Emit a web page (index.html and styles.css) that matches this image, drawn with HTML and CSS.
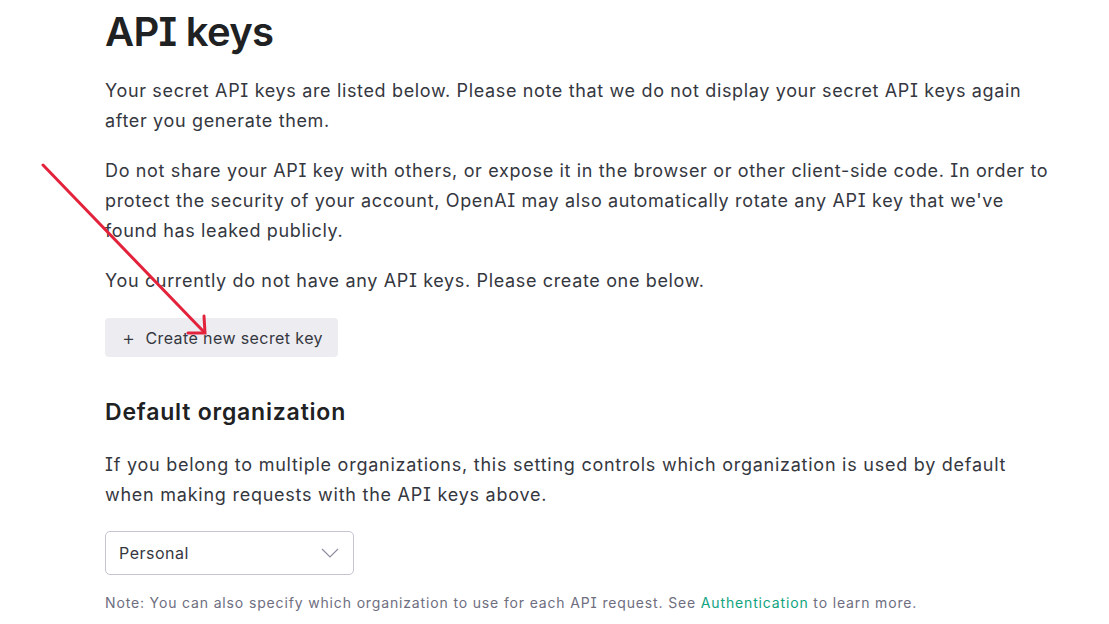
FILE: index.html
```html
<!DOCTYPE html>
<html lang="en">
<head>
<meta charset="utf-8">
<title>API keys</title>
<link rel="stylesheet" href="styles.css">
</head>
<body>
<main class="page">
  <h1 class="title">API keys</h1>
  <p class="text">Your secret API keys are listed below. Please note that we do not display your secret API keys again after you generate them.</p>
  <p class="text">Do not share your API key with others, or expose it in the browser or other client-side code. In order to protect the security of your account, OpenAI may also automatically rotate any API key that we've found has leaked publicly.</p>
  <p class="text">You currently do not have any API keys. Please create one below.</p>
  <button class="btn" type="button"><span class="plus">+</span>Create new secret key</button>
  <h2 class="subtitle">Default organization</h2>
  <p class="text text-org">If you belong to multiple organizations, this setting controls which organization is used by default when making requests with the API keys above.</p>
  <div class="select">
    <span>Personal</span>
    <svg class="chev" width="18" height="10" viewBox="0 0 18 10"><path d="M1 1l8 8 8-8" fill="none" stroke="#8e8ea0" stroke-width="1.2"/></svg>
  </div>
  <p class="note">Note: You can also specify which organization to use for each API request. See <a class="link" href="#">Authentication</a> to learn more.</p>
</main>
<svg class="arrow" width="1109" height="624" viewBox="0 0 1109 624">
  <g stroke="#e3223c" stroke-width="3" stroke-linecap="round" fill="none">
    <path d="M43 165 L204 332"/>
    <path d="M204 316 L205 333 L188 333"/>
  </g>
</svg>
</body>
</html>
```
FILE: styles.css
```css
html, body {
  margin: 0;
  padding: 0;
  background: #ffffff;
}
body {
  font-family: Inter, "Noto Sans", sans-serif;
  font-feature-settings: "cv08";
  color: #353740;
}
.page {
  padding: 8px 0 0 105px;
  width: 950px;
}
.title {
  margin: 0;
  font-size: 40px;
  font-weight: 600;
  line-height: 48px;
  color: #202123;
  letter-spacing: -0.7px;
}
.text {
  margin: 20px 0 0;
  font-size: 18px;
  line-height: 30px;
  letter-spacing: 0.65px;
  color: #353740;
}
.btn {
  margin-top: 22px;
  display: flex;
  align-items: center;
  height: 39px;
  padding: 0 15px 0 17px;
  border: none;
  border-radius: 4px;
  background: #ececf1;
  color: #353740;
  font-family: inherit;
  font-feature-settings: "cv08";
  font-size: 16px;
  letter-spacing: 0.4px;
}
.plus {
  font-size: 20px;
  margin-right: 10px;
  font-weight: 300;
  line-height: 1;
}
.subtitle {
  margin: 40px 0 0;
  font-size: 23px;
  line-height: 30px;
  font-weight: 600;
  letter-spacing: 0.8px;
  color: #202123;
}
.text-org {
  margin-top: 23px;
  letter-spacing: 0.75px;
}
.select {
  margin-top: 21px;
  width: 249px;
  height: 44px;
  box-sizing: border-box;
  border: 1px solid #c5c5d2;
  border-radius: 5px;
  display: flex;
  align-items: center;
  justify-content: space-between;
  padding: 0 14px 0 13px;
  font-size: 16px;
  letter-spacing: 0.5px;
  color: #353740;
}
.note {
  margin: 17px 0 0;
  font-size: 14px;
  line-height: 22px;
  letter-spacing: 0.85px;
  color: #6e6e80;
}
.link {
  color: #10a37f;
  text-decoration: none;
}
.arrow {
  position: absolute;
  left: 0;
  top: 0;
  pointer-events: none;
}
```
